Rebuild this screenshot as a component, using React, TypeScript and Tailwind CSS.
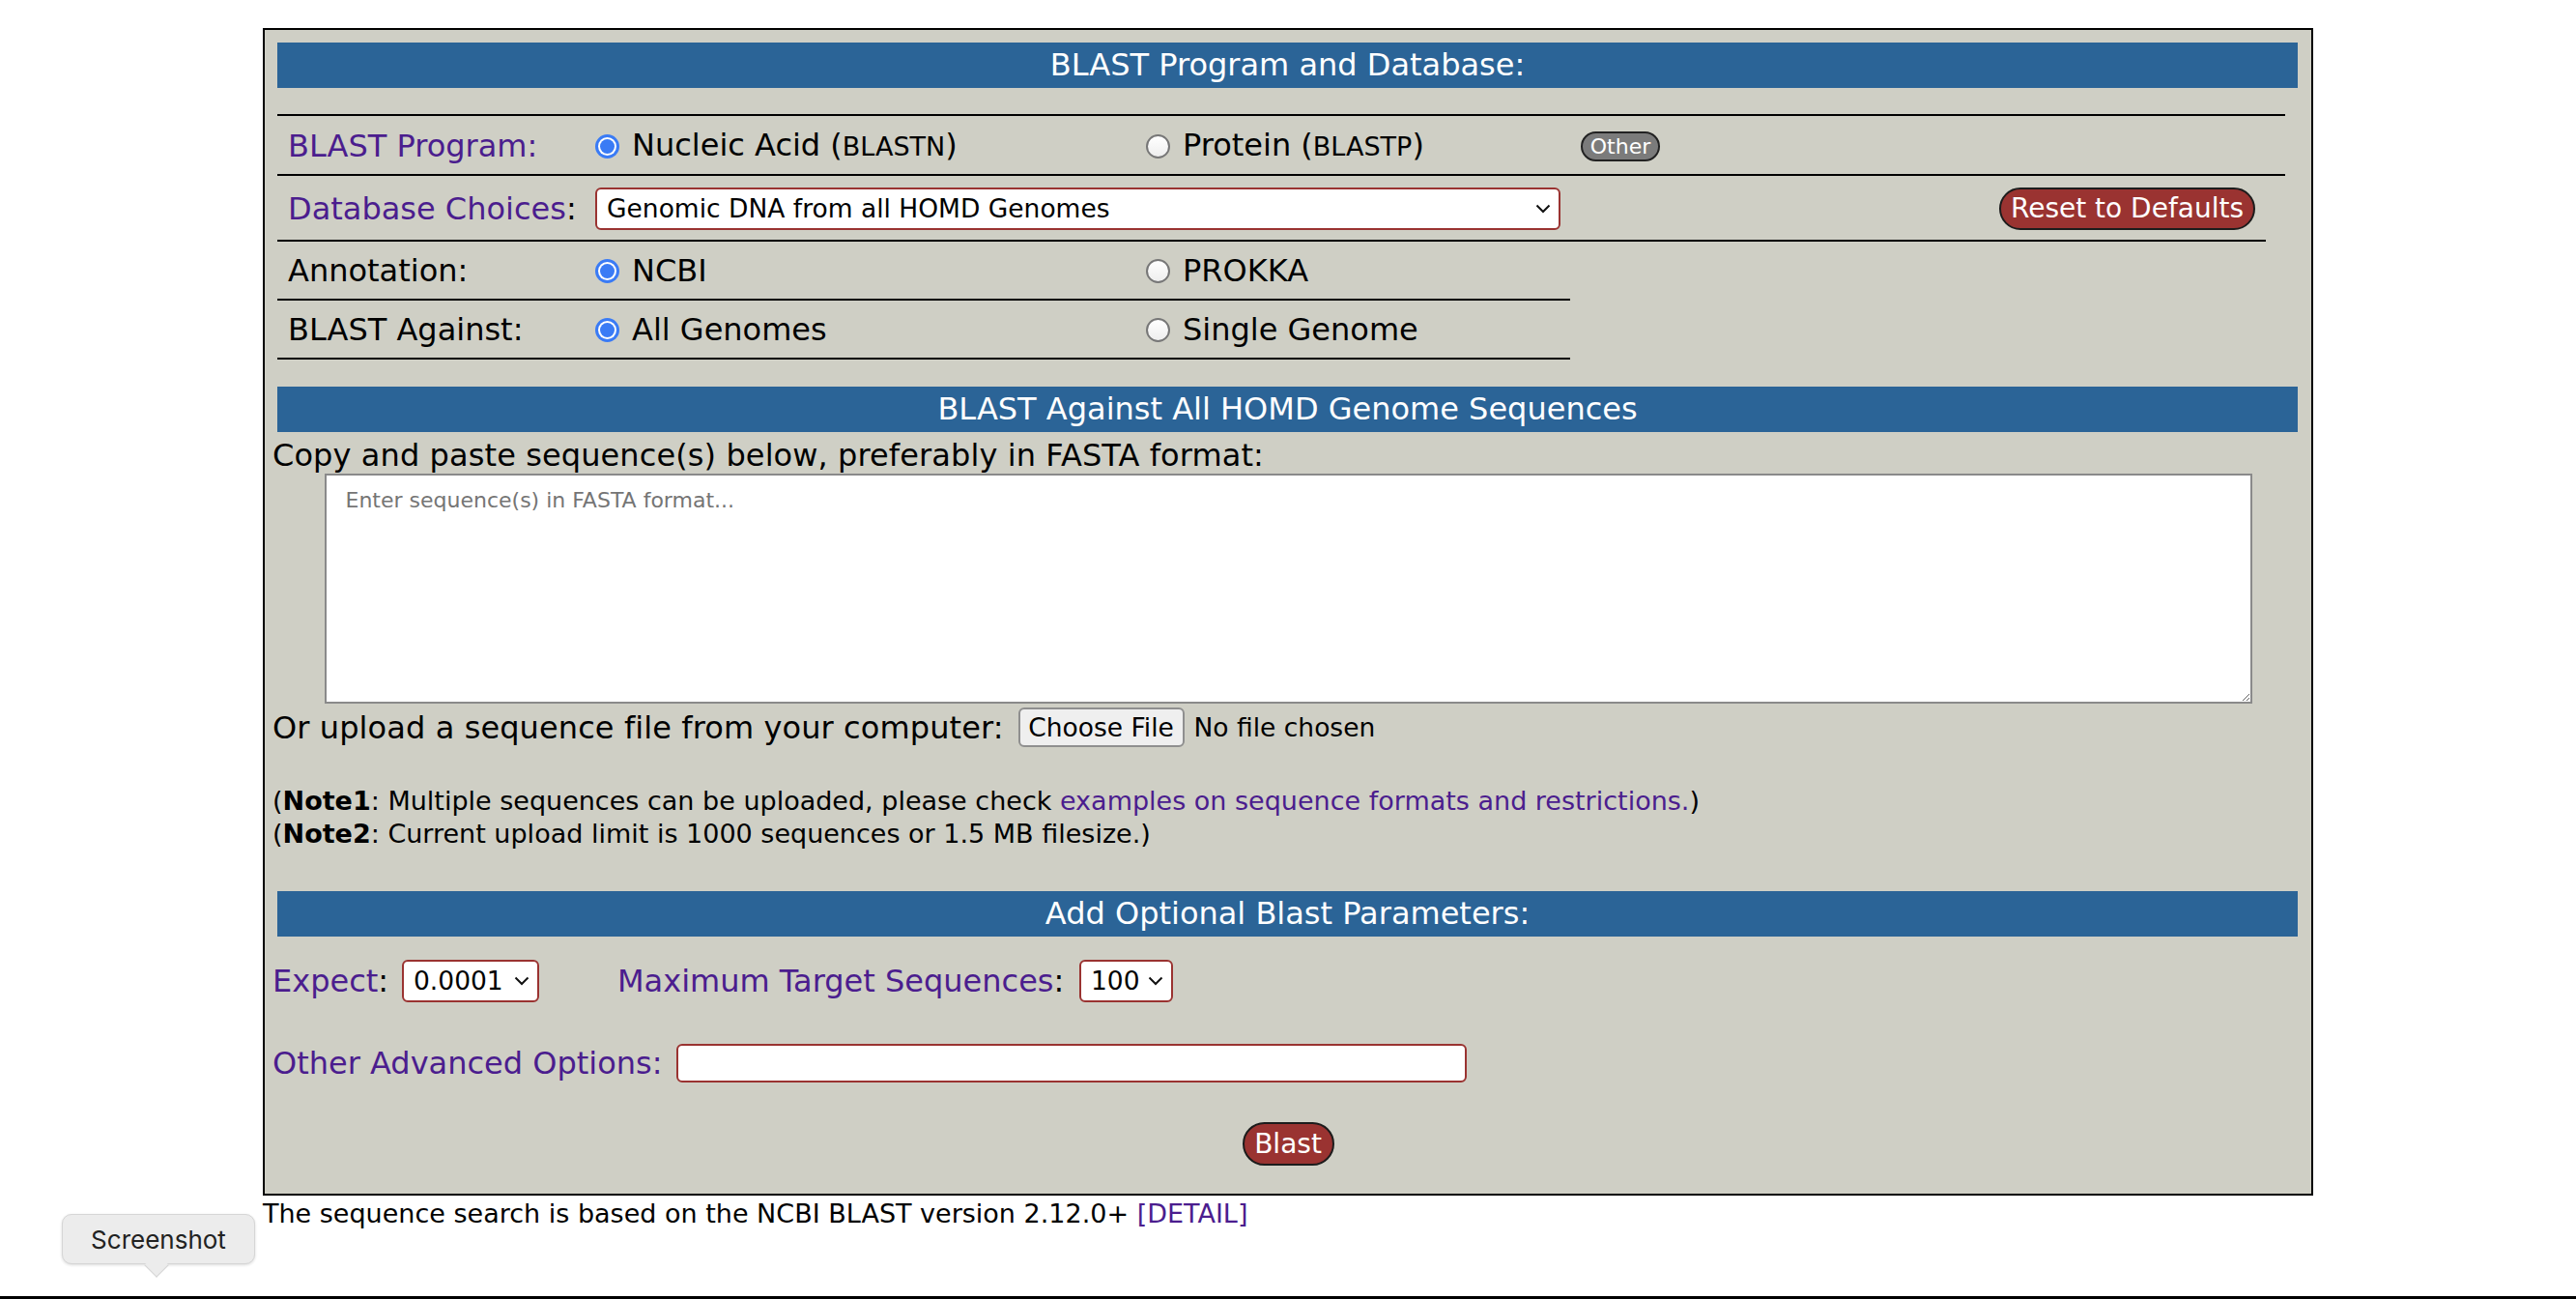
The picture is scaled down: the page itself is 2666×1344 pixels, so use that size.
import type { ReactNode } from "react";

const LINK = "text-[#4b1d8e]";

function Bar({ children }: { children: ReactNode }) {
  return (
    <div className="ml-[5px] mr-[6px] h-[47px] bg-[#2b6497] text-center text-[32px] leading-[47px] text-white">
      {children}
    </div>
  );
}

function Radio({ checked }: { checked?: boolean }) {
  if (checked) {
    return (
      <span className="flex h-[25px] w-[25px] shrink-0 items-center justify-center rounded-full bg-[#3a7bf5]">
        <span className="flex h-[19px] w-[19px] items-center justify-center rounded-full bg-white">
          <span className="h-[15px] w-[15px] rounded-full bg-[#3a7bf5]" />
        </span>
      </span>
    );
  }
  return <span className="h-[25px] w-[25px] shrink-0 rounded-full border-2 border-[#777] bg-gradient-to-b from-white to-[#eee]" />;
}

function Option({ checked, children }: { checked?: boolean; children: ReactNode }) {
  return (
    <span className="flex items-center gap-[13px]">
      <Radio checked={checked} />
      <span className="leading-[37px]">{children}</span>
    </span>
  );
}

function Chevron() {
  return (
    <svg width="16" height="10" viewBox="0 0 16 10" className="shrink-0">
      <path d="M1.5 1.5 L8 8 L14.5 1.5" fill="none" stroke="#111" strokeWidth="2" />
    </svg>
  );
}

function Select({ value, className }: { value: string; className: string }) {
  return (
    <div
      className={
        "flex h-[44px] items-center justify-between rounded-[6px] border-2 border-[#9a3331] bg-white pl-[10px] pr-[8px] text-[26.5px] " +
        className
      }
    >
      <span>{value}</span>
      <Chevron />
    </div>
  );
}

export default function App() {
  return (
    <div className="relative h-[1344px] overflow-hidden bg-white font-['DejaVu_Sans',Verdana,sans-serif] text-black">
      <div className="pt-[29px]">
        <div className="mx-auto w-[2122px] border-2 border-black bg-[#cfcfc5] px-[8px] pt-[13px] pb-[29px]">
          <Bar>BLAST Program and Database:</Bar>

          {/* program / database table */}
          <div className="ml-[5px] mt-[27px] w-[2078px] text-[32px]">
            <div className="h-[2px] w-[2078px] bg-black" />
            <div className="flex h-[60px] items-center pt-[2px]">
              <span className={"w-[329px] pl-[11px] " + LINK}>BLAST Program:</span>
              <span className="w-[570px]">
                <Option checked>
                  Nucleic Acid (<span className="text-[27px]">BLASTN</span>)
                </Option>
              </span>
              <span className="w-[450px]">
                <Option>
                  Protein (<span className="text-[27px]">BLASTP</span>)
                </Option>
              </span>
              <button className="flex h-[31px] w-[82px] items-center justify-center rounded-full border-2 border-[#222] bg-[#7b7b7b] text-[22px] text-white">
                Other
              </button>
            </div>
            <div className="h-[2px] w-[2078px] bg-black" />
            <div className="flex h-[66px] items-center pt-[1px]">
              <span className="w-[329px] pl-[11px]">
                <span className={LINK}>Database Choices</span>:
              </span>
              <Select value="Genomic DNA from all HOMD Genomes" className="w-[999px]" />
              <button className="ml-[454px] flex h-[44px] w-[265px] items-center justify-center rounded-full border-2 border-[#1c1c1c] bg-[#9a3331] text-[28px] text-white">
                Reset to Defaults
              </button>
            </div>
            <div className="h-[2px] w-[2058px] bg-black" />
            <div className="flex h-[59px] items-center pt-[1px]">
              <span className="w-[329px] pl-[11px]">Annotation:</span>
              <span className="w-[570px]">
                <Option checked>NCBI</Option>
              </span>
              <Option>PROKKA</Option>
            </div>
            <div className="h-[2px] w-[1338px] bg-black" />
            <div className="flex h-[59px] items-center pt-[1px]">
              <span className="w-[329px] pl-[11px]">BLAST Against:</span>
              <span className="w-[570px]">
                <Option checked>All Genomes</Option>
              </span>
              <Option>Single Genome</Option>
            </div>
            <div className="h-[2px] w-[1338px] bg-black" />
          </div>

          <div className="mt-[28px]">
            <Bar>BLAST Against All HOMD Genome Sequences</Bar>
          </div>
          <div className="pt-[6px] text-[32px] leading-[37px] tracking-[0.1px]">
            Copy and paste sequence(s) below, preferably in FASTA format:
          </div>
          <textarea
            className="mx-auto block h-[238px] w-[1995px] border-2 border-[#8a8a8a] bg-white px-[20px] py-[12px] text-[22px] leading-[28px] outline-none placeholder:text-[#757575]"
            placeholder="Enter sequence(s) in FASTA format..."
          />
          <div className="mt-[4px] flex h-[41px] items-center text-[32px]">
            <span className="tracking-[0.1px]">Or upload a sequence file from your computer:</span>
            <button className="ml-[15px] flex h-[41px] w-[172px] items-center justify-center rounded-[6px] border-2 border-[#8f8f8f] bg-[#efefef] text-[26.5px]">
              Choose File
            </button>
            <span className="ml-[10px] text-[26.5px]">No file chosen</span>
          </div>

          <div className="mt-[39px] text-[27px] leading-[34px]">
            <div>
              (<b>Note1</b>: Multiple sequences can be uploaded, please check{" "}
              <span className={LINK}>examples on sequence formats and restrictions.</span>)
            </div>
            <div>
              (<b>Note2</b>: Current upload limit is 1000 sequences or 1.5 MB filesize.)
            </div>
          </div>

          <div className="mt-[42px]">
            <Bar>Add Optional Blast Parameters:</Bar>
          </div>

          <div className="mt-[24px] flex h-[44px] items-center text-[32px]">
            <span className="w-[134px]">
              <span className={LINK}>Expect</span>:
            </span>
            <Select value="0.0001" className="w-[142px]" />
            <span className="ml-[81px] w-[478px]">
              <span className={LINK}>Maximum Target Sequences</span>:
            </span>
            <Select value="100" className="w-[97px]" />
          </div>

          <div className="mt-[43px] flex h-[40px] items-center text-[32px]">
            <span className={"w-[418px] " + LINK}>Other Advanced Options:</span>
            <input className="h-[40px] w-[818px] rounded-[6px] border-2 border-[#9a3331] bg-white outline-none" />
          </div>

          <button className="mx-auto mt-[41px] flex h-[45px] w-[95px] items-center justify-center rounded-full border-2 border-[#1c1c1c] bg-[#9a3331] text-[28px] text-white">
            Blast
          </button>
        </div>

        <div className="mx-auto w-[2122px] text-[27px] leading-[38px]">
          The sequence search is based on the NCBI BLAST version 2.12.0+ <span className={LINK}>[DETAIL]</span>
        </div>
      </div>

      {/* OS screenshot tooltip */}
      <div className="absolute left-[64px] top-[1256px] flex h-[52px] w-[200px] items-center justify-center rounded-[10px] border border-[#d6d6d6] bg-[#ececec] font-['Inter',sans-serif] text-[26px] text-[#222] shadow-[0_1px_3px_rgba(0,0,0,0.15)]">
        Screenshot
        <span className="absolute left-[88px] top-[43px] h-[18px] w-[18px] rotate-45 border-b border-r border-[#d6d6d6] bg-[#ececec]" />
      </div>

      <div className="absolute bottom-0 left-0 right-0 h-[3px] bg-black" />
    </div>
  );
}
